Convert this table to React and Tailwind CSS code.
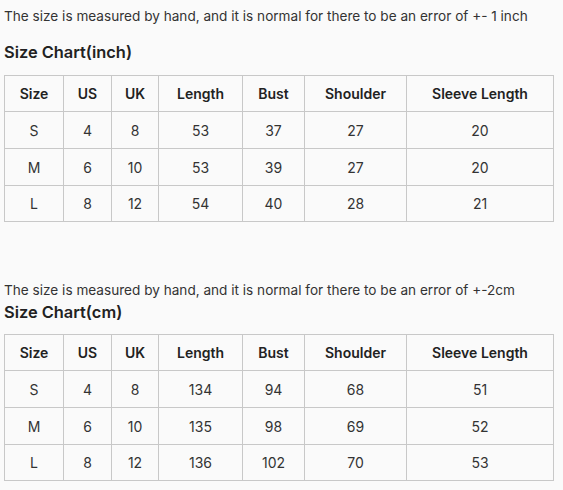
const headers = ["Size", "US", "UK", "Length", "Bust", "Shoulder", "Sleeve Length"];
const widths = ["w-[59px]", "w-[48px]", "w-[47px]", "w-[84px]", "w-[62px]", "w-[102px]", "w-[147px]"];

function Chart({ rows }) {
  return (
    <table className="table-fixed border-collapse w-[549px] border border-[#c8c8c8] text-[14px] text-[#333]">
      <colgroup>
        {widths.map((w, i) => (
          <col key={i} className={w} />
        ))}
      </colgroup>
      <thead>
        <tr className="h-[36px]">
          {headers.map((h) => (
            <th key={h} className="border border-[#c8c8c8] font-semibold text-center text-[#222] p-0">
              {h}
            </th>
          ))}
        </tr>
      </thead>
      <tbody>
        {rows.map((r, i) => (
          <tr key={i} className={i === 2 ? "h-[36px]" : "h-[37px]"}>
            {r.map((c, j) => (
              <td key={j} className="border border-[#c8c8c8] text-center p-0">
                {c}
              </td>
            ))}
          </tr>
        ))}
      </tbody>
    </table>
  );
}

export default function App() {
  const inch = [
    ["S", "4", "8", "53", "37", "27", "20"],
    ["M", "6", "10", "53", "39", "27", "20"],
    ["L", "8", "12", "54", "40", "28", "21"],
  ];
  const cm = [
    ["S", "4", "8", "134", "94", "68", "51"],
    ["M", "6", "10", "135", "98", "69", "52"],
    ["L", "8", "12", "136", "102", "70", "53"],
  ];
  return (
    <div className="w-[563px] h-[490px] bg-[#fafafa] pl-[4px] text-[#333] overflow-hidden" style={{ fontFamily: "Inter, 'Noto Sans', sans-serif" }}>
      <p className="text-[13.6px] leading-[20px] pt-[6px]">
        The size is measured by hand, and it is normal for there to be an error of +- 1 inch
      </p>
      <h2 className="text-[16.4px] font-semibold text-[#222] leading-[24px] mt-[14px] mb-[11px]">Size Chart(inch)</h2>
      <Chart rows={inch} />
      <p className="text-[13.6px] leading-[20px] mt-[58px]">
        The size is measured by hand, and it is normal for there to be an error of +-2cm
      </p>
      <h2 className="text-[16.4px] font-semibold text-[#222] leading-[24px] mb-[10px]">Size Chart(cm)</h2>
      <Chart rows={cm} />
    </div>
  );
}
